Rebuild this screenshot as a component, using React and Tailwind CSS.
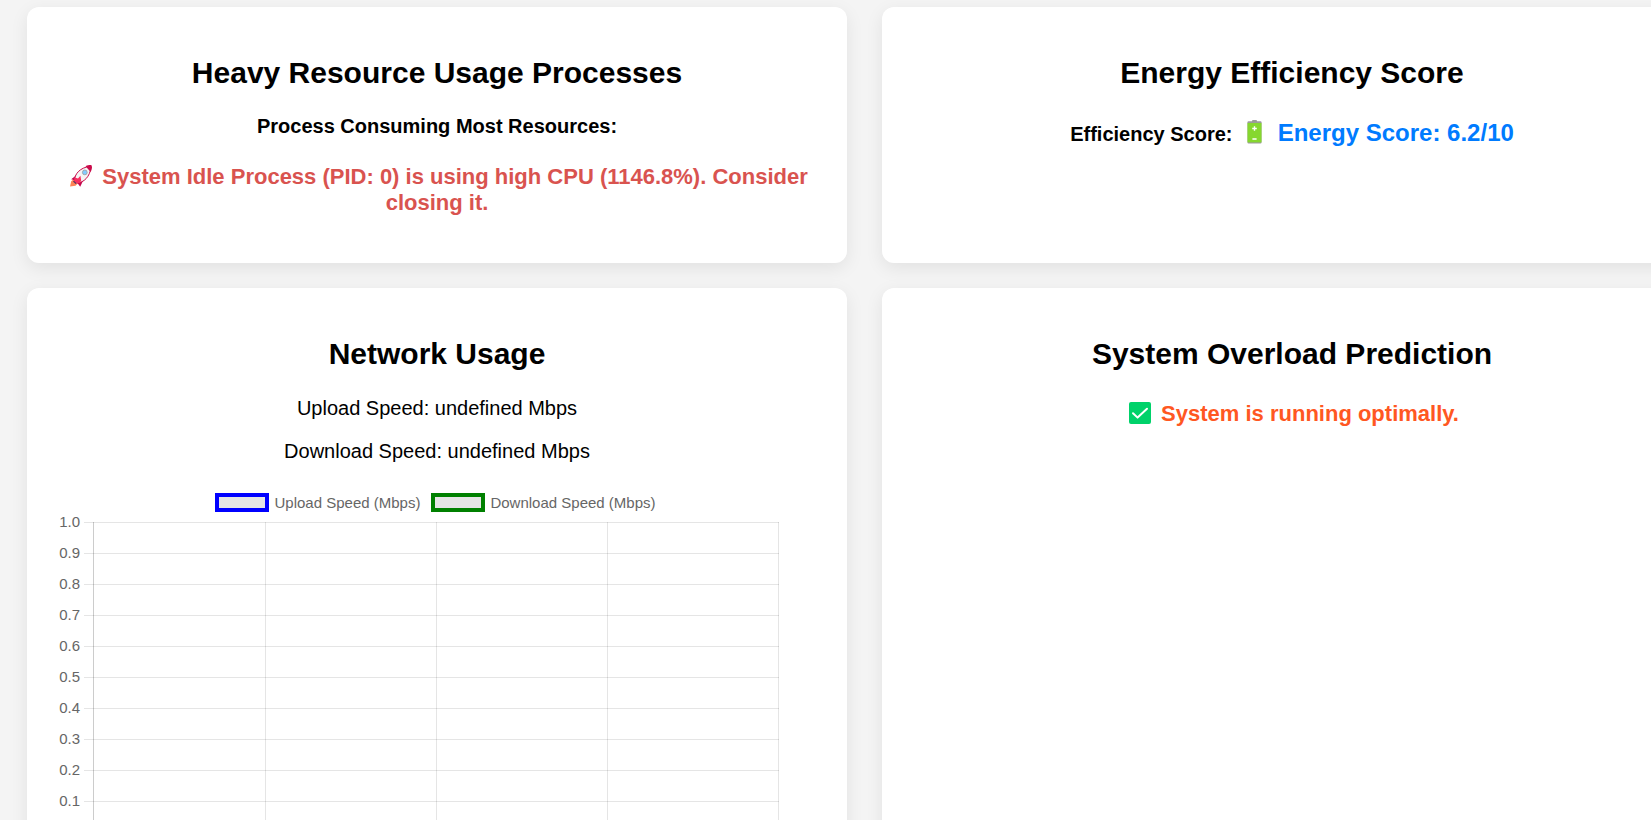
const ticks = ['1.0', '0.9', '0.8', '0.7', '0.6', '0.5', '0.4', '0.3', '0.2', '0.1']
const columns = [213, 384, 555, 726]

function Rocket() {
  return (
    <svg viewBox="-4 0 30 22" className="inline h-[22px] w-[30px] align-[-3px]" role="img" aria-label="Rocket">
      <path d="M4 14 1.2 16.2 0 21.6 5.5 20.8 8.2 18Z" fill="#ff8357" />
      <path d="M7 9.8 1.2 14.2 4.6 15.2 7.2 17.8 10.2 21.8 13.4 15Z" fill="#c3064d" />
      <path d="M4.5 15.8C4.4 9.4 9.6 2.6 20.2 1.3L21 2.1C20 11.6 14 17.8 6.6 18Z" fill="#f4f4f4" stroke="#ca0b4a" strokeWidth="1" />
      <path d="M15.6 1.2C18.4 0 20.8-.1 21.6.4 22.2 1.6 22 4.4 20.6 7Z" fill="#ca0b4a" />
      <path d="M4.8 12.5 8 13.4 10.4 10.8 11.2 15.4 9.6 18.2 5.2 17.4 4 16.3Z" fill="#f92f60" />
      <path d="M3.8 15.7 6.6 18.2 5.6 19 3 16.5Z" fill="#533566" />
      <circle cx="14.8" cy="7.4" r="2.4" fill="#83cbff" stroke="#9b9b9b" strokeWidth=".8" />
    </svg>
  )
}

function Battery() {
  return (
    <svg viewBox="0 0 33 24" className="inline h-6 w-[33px] align-[-3px]" role="img" aria-label="Battery">
      <rect x="14" y="0" width="5" height="3" rx="1" fill="#9b9b9b" />
      <rect x="9.5" y="1.2" width="14" height="22.4" rx="1" fill="#9b9b9b" />
      <rect x="9.5" y="3" width="14" height="19.4" fill="#86d72f" />
      <path d="M16.5 6.2v4.6M14.2 8.5h4.6M14.4 19h4.2" stroke="#fff" strokeWidth="1.4" />
    </svg>
  )
}

function Check() {
  return (
    <svg viewBox="0 0 30 22" className="inline h-[22px] w-[30px] align-[-3px]" role="img" aria-label="Check mark">
      <rect x="4" width="22" height="22" rx="2" fill="#00d26a" />
      <path d="M8 11.2 12.6 15.6 22 6.8" fill="none" stroke="#fff" strokeWidth="2" strokeLinecap="round" strokeLinejoin="round" />
    </svg>
  )
}

function Card({ title, children }) {
  return (
    <section className="rounded-xl bg-white px-[25px] pt-12 pb-[47px] text-center shadow-[0_5px_18px_rgba(0,0,0,0.08)]">
      <h2 className="text-[30px] leading-9 font-bold">{title}</h2>
      {children}
    </section>
  )
}

function Legend() {
  return (
    <ul className="mt-[29px] flex justify-center gap-[11px] pr-[3px] text-[15px] leading-[21px] text-[#666]">
      <li className="flex items-center gap-[5px]">
        <span className="h-[19px] w-[54px] border-4 border-[#0000ff] bg-[#e5e5e5]" />
        Upload Speed (Mbps)
      </li>
      <li className="flex items-center gap-[5px]">
        <span className="h-[19px] w-[54px] border-4 border-[#008000] bg-[#e5e5e5]" />
        Download Speed (Mbps)
      </li>
    </ul>
  )
}

function SpeedChart() {
  return (
    <svg viewBox="0 0 770 340" className="block w-full" role="img" aria-label="Network speed chart">
      {ticks.map((tick, i) => (
        <g key={tick}>
          <path d={`M32 ${9.5 + i * 31}H727`} stroke="#000" strokeOpacity="0.1" />
          <text x="28" y={14 + i * 31} textAnchor="end" fontSize="15" fill="#666">{tick}</text>
        </g>
      ))}
      <path d="M41.5 9V320" stroke="#000" strokeOpacity="0.2" />
      {columns.map((x) => (
        <path key={x} d={`M${x + 0.5} 9V320`} stroke="#000" strokeOpacity="0.1" />
      ))}
    </svg>
  )
}

export default function App() {
  return (
    <main className="h-screen overflow-hidden bg-[#f4f4f4] pt-[7px] pl-[27px] font-['Liberation_Sans',Arial,sans-serif] text-black">
      <div className="grid grid-cols-[repeat(2,minmax(820px,1fr))] gap-x-[35px] gap-y-[25px]">
        <Card title="Heavy Resource Usage Processes">
          <p className="mt-[23px] text-[20px] leading-6 font-bold">Process Consuming Most Resources:</p>
          <p className="mt-[26px] text-[22px] leading-[26px] font-bold text-[#d9534f]">
            <Rocket /> System Idle Process (PID: 0) is using high CPU (1146.8%). Consider closing it.
          </p>
        </Card>
        <Card title="Energy Efficiency Score">
          <p className="mt-7 text-[20px] leading-7 font-bold">
            Efficiency Score:{' '}
            <span className="text-2xl leading-7 text-[#007bff]"><Battery /> Energy Score: 6.2/10</span>
          </p>
        </Card>
        <Card title="Network Usage">
          <p className="mt-6 text-[20px] leading-6">Upload Speed: undefined Mbps</p>
          <p className="mt-[19px] text-[20px] leading-6">Download Speed: undefined Mbps</p>
          <Legend />
          <SpeedChart />
        </Card>
        <Card title="System Overload Prediction">
          <p className="mt-[29px] text-[22px] leading-[26px] font-bold text-[#ff5722]">
            <Check /> System is running optimally.
          </p>
        </Card>
      </div>
    </main>
  )
}
